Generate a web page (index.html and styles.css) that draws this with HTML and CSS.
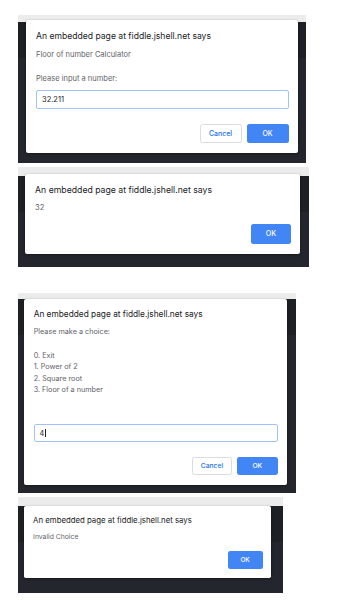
FILE: index.html
```html
<!DOCTYPE html>
<html lang="en">
<head>
<meta charset="utf-8">
<title>Dialogs</title>
<link rel="stylesheet" href="styles.css">
</head>
<body>
<main class="stack">
  <section class="panel panel-1">
    <div class="dialog">
      <h1 class="title">An embedded page at fiddle.jshell.net says</h1>
      <p class="msg">Floor of number Calculator<br><br>Please input a number:</p>
      <div class="field"><span class="field-text">32.211</span></div>
      <div class="actions">
        <button class="btn btn-cancel">Cancel</button>
        <button class="btn btn-ok">OK</button>
      </div>
    </div>
  </section>

  <section class="panel panel-2">
    <div class="dialog">
      <h1 class="title">An embedded page at fiddle.jshell.net says</h1>
      <p class="msg">32</p>
      <div class="actions actions-near">
        <button class="btn btn-ok">OK</button>
      </div>
    </div>
  </section>

  <section class="panel panel-3">
    <div class="dialog">
      <h1 class="title">An embedded page at fiddle.jshell.net says</h1>
      <p class="msg msg-tall">Please make a choice:<br><br>0. Exit<br>1. Power of 2<br>2. Square root<br>3. Floor of a number</p>
      <div class="field"><span class="field-text">4</span><span class="caret"></span></div>
      <div class="actions">
        <button class="btn btn-cancel">Cancel</button>
        <button class="btn btn-ok">OK</button>
      </div>
    </div>
  </section>

  <section class="panel panel-4">
    <div class="dialog">
      <h1 class="title">An embedded page at fiddle.jshell.net says</h1>
      <p class="msg">Invalid Choice</p>
      <div class="actions actions-near">
        <button class="btn btn-ok">OK</button>
      </div>
    </div>
  </section>
</main>
</body>
</html>
```

FILE: styles.css
```css
* { box-sizing: border-box; }

html, body {
  margin: 0;
  padding: 0;
  background: #ffffff;
}

body {
  font-family: Inter, "Noto Sans", "Liberation Sans", sans-serif;
  color: #202124;
}

.stack {
  display: flex;
  flex-direction: column;
  align-items: flex-start;
  padding-top: 15px;
}

.panel {
  --s: 1;
  --g: 7px;
  margin-left: 18px;
  background:
    linear-gradient(to bottom,
      #ececec 0, #ececec var(--g),
      #1d2025 var(--g), #1d2025 calc(var(--g) + 36px),
      #23262c calc(var(--g) + 36px));
}

.panel-1 { --s: 1;     --g: 7px; width: 288px; padding: 5px 0 10px 8px; }
.panel-2 { --s: 1.012; --g: 9px; width: 291px; padding: 7px 0 13px 7px; margin-top: 4px; }
.panel-3 { --s: 0.966; --g: 6px; width: 278px; padding: 6px 0 8px 6px;  margin-top: 26px; }
.panel-4 { --s: 0.909; --g: 9px; width: 265px; padding: 9px 0 15px 6px; margin-top: 4px; }

.dialog {
  width: calc(var(--s) * 272px);
  background: #ffffff;
  border-radius: calc(var(--s) * 2px);
  box-shadow: 0 1px 3px rgba(0, 0, 0, 0.35), 0 0 1px rgba(0, 0, 0, 0.2);
  padding: calc(var(--s) * 10px) calc(var(--s) * 9.5px) calc(var(--s) * 10px) calc(var(--s) * 10px);
  display: flex;
  flex-direction: column;
}

.title {
  margin: 0 0 calc(var(--s) * 6.5px);
  font-size: calc(var(--s) * 8.6px);
  line-height: calc(var(--s) * 12px);
  font-weight: 400;
  color: #202124;
  white-space: nowrap;
}

.msg {
  margin: 0;
  font-size: calc(var(--s) * 7.5px);
  line-height: calc(var(--s) * 12px);
  color: #5f6368;
}

.msg-tall {
  padding-bottom: calc(var(--s) * 24px);
}

.field {
  margin-top: calc(var(--s) * 5px);
  height: calc(var(--s) * 19px);
  border: 1px solid #a1c2fa;
  border-radius: calc(var(--s) * 2px);
  padding-left: calc(var(--s) * 5px);
  display: flex;
  align-items: center;
  font-size: calc(var(--s) * 7.5px);
  color: #202124;
}

.caret {
  display: inline-block;
  width: 1px;
  height: calc(var(--s) * 9px);
  background: #202124;
  margin-left: 0.5px;
}

.actions {
  margin-top: calc(var(--s) * 15px);
  display: flex;
  justify-content: flex-end;
  gap: calc(var(--s) * 5px);
}

.actions-near {
  margin-top: calc(var(--s) * 9px);
}

.btn {
  width: calc(var(--s) * 42px);
  height: calc(var(--s) * 19px);
  border-radius: calc(var(--s) * 2.5px);
  font-family: inherit;
  font-size: calc(var(--s) * 7px);
  font-weight: 500;
  padding: 0;
  display: flex;
  align-items: center;
  justify-content: center;
}

.btn-cancel {
  background: #ffffff;
  border: 1px solid #dadce0;
  color: #1a73e8;
}

.btn-ok {
  background: #4285f4;
  border: none;
  color: #ffffff;
}

.panel-2 .btn-ok { width: calc(var(--s) * 39px); height: calc(var(--s) * 20px); }
.panel-4 .btn-ok { width: calc(var(--s) * 38.5px); height: calc(var(--s) * 20px); }
```
